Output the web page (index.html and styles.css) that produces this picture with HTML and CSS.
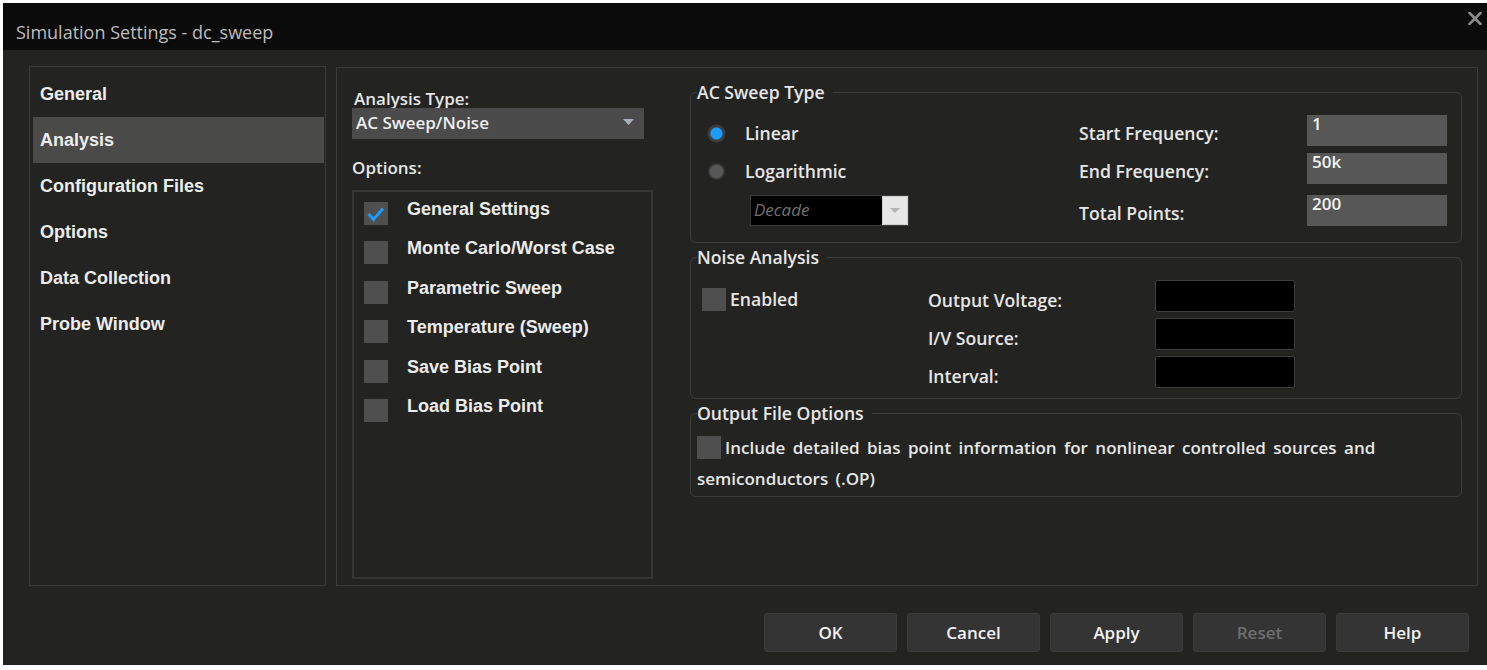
FILE: index.html
```html
<!DOCTYPE html>
<html lang="en">
<head>
<meta charset="utf-8">
<title>Simulation Settings - dc_sweep</title>
<link rel="stylesheet" href="styles.css">
</head>
<body>
<div class="dialog">
  <div class="titlebar">
    <span class="title">Simulation Settings - dc_sweep</span>
    <svg class="close" width="14" height="13" viewBox="0 0 14 13"><path d="M1.5 1 L12.5 12 M12.5 1 L1.5 12" stroke="#8d8d8d" stroke-width="2.6" stroke-linecap="square"/></svg>
  </div>
  <div class="body">
    <div class="main">
      <nav class="nav">
        <div class="nav-item">General</div>
        <div class="nav-item active">Analysis</div>
        <div class="nav-item">Configuration Files</div>
        <div class="nav-item">Options</div>
        <div class="nav-item">Data Collection</div>
        <div class="nav-item">Probe Window</div>
      </nav>
      <section class="panel">
        <div class="col-left">
          <div class="label at-label">Analysis Type:</div>
          <div class="select">
            <span>AC Sweep/Noise</span>
            <svg class="select-arrow" width="11" height="6" viewBox="0 0 11 6"><path d="M0 0 H11 L5.5 6 Z" fill="#a7b0bc"/></svg>
          </div>
          <div class="label opt-label">Options:</div>
          <div class="opt-list">
            <div class="opt-row"><span class="cb"><svg width="24" height="23" viewBox="0 0 24 23"><polyline points="4.5,12 9.5,17.5 19,6.5" fill="none" stroke="#1a9cf7" stroke-width="3"/></svg></span><span class="opt-text">General Settings</span></div>
            <div class="opt-row"><span class="cb"></span><span class="opt-text">Monte Carlo/Worst Case</span></div>
            <div class="opt-row"><span class="cb"></span><span class="opt-text">Parametric Sweep</span></div>
            <div class="opt-row"><span class="cb"></span><span class="opt-text">Temperature (Sweep)</span></div>
            <div class="opt-row"><span class="cb"></span><span class="opt-text">Save Bias Point</span></div>
            <div class="opt-row"><span class="cb"></span><span class="opt-text">Load Bias Point</span></div>
          </div>
        </div>
        <div class="col-right">
          <fieldset class="group g-ac">
            <legend>AC Sweep Type</legend>
            <div class="ac-grid">
              <div class="radio-row"><span class="radio on"></span><span class="label">Linear</span></div>
              <div class="label field-label">Start Frequency:</div>
              <div class="input">1</div>
              <div class="radio-row"><span class="radio"></span><span class="label">Logarithmic</span></div>
              <div class="label field-label">End Frequency:</div>
              <div class="input">50k</div>
              <div class="decade"><span class="decade-text">Decade</span><span class="decade-btn"><svg width="10" height="5" viewBox="0 0 10 5"><path d="M0 0 H10 L5 5 Z" fill="#b3b3b3"/></svg></span></div>
              <div class="label field-label">Total Points:</div>
              <div class="input">200</div>
            </div>
          </fieldset>
          <fieldset class="group g-noise">
            <legend>Noise Analysis</legend>
            <div class="noise-grid">
              <div class="enabled"><span class="cb"></span><span class="label">Enabled</span></div>
              <div class="label noise-label">Output Voltage:</div>
              <div class="input black"></div>
              <div></div>
              <div class="label noise-label">I/V Source:</div>
              <div class="input black"></div>
              <div></div>
              <div class="label noise-label">Interval:</div>
              <div class="input black"></div>
            </div>
          </fieldset>
          <fieldset class="group g-out">
            <legend>Output File Options</legend>
            <p class="out-text"><span class="cb inline"></span>Include detailed bias point information for nonlinear controlled sources and semiconductors (.OP)</p>
          </fieldset>
        </div>
      </section>
    </div>
    <div class="buttons">
      <button class="btn">OK</button>
      <button class="btn">Cancel</button>
      <button class="btn">Apply</button>
      <button class="btn disabled">Reset</button>
      <button class="btn">Help</button>
    </div>
  </div>
</div>
</body>
</html>
```
FILE: styles.css
```css
* { box-sizing: border-box; }
html, body { margin: 0; background: #ffffff; }
body { padding: 3px 0 5px 3px; height: 670px; overflow: hidden; }

.dialog {
  width: 1484px;
  height: 662px;
  background: #232422;
  display: flex;
  flex-direction: column;
  font-family: "Open Sans", "Noto Sans", sans-serif;
  color: #e8e8e8;
}

.titlebar {
  height: 47px;
  flex: none;
  background: #0b0b0b;
  display: flex;
  justify-content: space-between;
  align-items: flex-start;
  padding: 0 5px 0 13px;
}
.title {
  margin-top: 18px;
  font-size: 18px;
  line-height: 22px;
  color: #bdbdbd;
}
.close { margin-top: 9px; }

.body {
  flex: 1;
  display: flex;
  flex-direction: column;
  padding: 16px 9px 0 26px;
}
.main {
  height: 520px;
  display: flex;
  gap: 10px;
}

.nav {
  width: 297px;
  flex: none;
  border: 1px solid #3a3b39;
  padding: 4px 1px 0 3px;
}
.nav-item {
  height: 46px;
  display: flex;
  align-items: center;
  padding-left: 7px;
  font: bold 18px "Liberation Sans", Arial, sans-serif;
  color: #ececec;
}
.nav-item.active { background: #4a4b49; }

.panel {
  flex: 1;
  margin-top: 1px;
  border: 1px solid #3a3b39;
  display: flex;
  gap: 37px;
  padding: 0 15px 0 15px;
}

.label {
  font-size: 17px;
  font-weight: 600;
  line-height: 22px;
  color: #e6e6e6;
  white-space: nowrap;
}
.col-right .label { font-size: 17.6px; }

.col-left {
  width: 301px;
  flex: none;
  display: flex;
  flex-direction: column;
  padding: 21px 0 6px 0;
}
.at-label { line-height: 19px; padding-left: 2px; }
.select {
  height: 31px;
  background: #4b4b4b;
  display: flex;
  align-items: center;
  justify-content: space-between;
  padding: 0 10px 0 4px;
  font-size: 17px;
  font-weight: 600;
  color: #eeeeee;
  width: 292px;
}
.select span { line-height: 22px; margin-top: -1px; }
.select-arrow { margin-top: -3px; }
.opt-label { margin-top: 18px; }
.opt-list {
  flex: 1;
  margin-top: 11px;
  border: 2px solid #353634;
  padding: 6px 0 0 10px;
}
.opt-row {
  height: 39.4px;
  display: flex;
  align-items: flex-start;
  gap: 19px;
}
.cb {
  width: 24px;
  height: 23px;
  flex: none;
  background: #4f4f4f;
  display: block;
}
.opt-row .cb { margin-top: 4px; }
.cb svg { display: block; }
.opt-text {
  font: bold 18px "Liberation Sans", Arial, sans-serif;
  line-height: 22px;
  color: #ececec;
  white-space: nowrap;
}

.col-right {
  width: 772px;
  flex: none;
  padding-top: 13px;
  display: flex;
  flex-direction: column;
  gap: 3px;
}
.group {
  margin: 0;
  min-width: 0;
  border: 1px solid #3c3d3b;
  border-radius: 6px;
  padding: 0 14px 0 6px;
}
.group legend {
  padding: 0 8px 0 0;
  font-size: 17.6px;
  font-weight: 600;
  line-height: 22px;
  color: #e6e6e6;
}

.g-ac { padding-top: 12px; padding-bottom: 16px; }
.ac-grid {
  display: grid;
  grid-template-columns: 382px 228px 140px;
  grid-template-rows: 38px 42px 31px;
}
.radio-row {
  height: 31px;
  padding-top: 5px;
  display: flex;
  align-items: center;
  padding-left: 10px;
  gap: 19px;
}
.radio {
  width: 19px;
  height: 19px;
  border-radius: 50%;
  flex: none;
  background: radial-gradient(circle, #575757 0 6px, rgba(87,87,87,0.4) 7.5px, transparent 9px);
}
.radio.on {
  background: radial-gradient(circle, #1b9dff 0 5.5px, #3d3f42 6.5px 8px, rgba(61,63,66,0.4) 9px, transparent 9.5px);
}
.field-label {
  height: 31px;
  padding-top: 5px;
  display: flex;
  align-items: center;
}
.input {
  height: 31px;
  background: #575757;
  font-size: 17px;
  font-weight: 600;
  line-height: 18px;
  color: #f2f2f2;
  padding: 0 5px;
}
.decade {
  margin-left: 53px;
  width: 159px;
  height: 31px;
  background: #000;
  border: 1px solid #3a3a3a;
  display: flex;
  justify-content: space-between;
}
.decade-text {
  font-size: 17px;
  font-style: italic;
  color: #707070;
  line-height: 28px;
  padding-left: 3px;
}
.decade-btn {
  width: 26px;
  background: #e6e6e6;
  border: 1px solid #cfcfcf;
  display: flex;
  align-items: center;
  justify-content: center;
}

.g-noise { padding-top: 12px; padding-bottom: 10px; }
.noise-grid {
  display: grid;
  grid-template-columns: 231px 227px 140px;
  grid-auto-rows: 32px;
  row-gap: 6px;
}
.enabled {
  display: flex;
  align-items: center;
  gap: 4px;
  padding-left: 5px;
  padding-top: 6px;
}
.noise-label { margin-top: 7.5px; line-height: 24px; }
.input.black {
  height: 32px;
  background: #000;
  border: 1px solid #3d3d3d;
  border-radius: 2px;
}

.g-out { padding-top: 8px; padding-bottom: 2px; }
.out-text {
  margin: 0;
  font-size: 17px;
  font-weight: 600;
  line-height: 31px;
  word-spacing: 3px;
  color: #e6e6e6;
}
.cb.inline {
  display: inline-block;
  vertical-align: -5px;
  margin-right: 4px;
}

.buttons {
  margin-top: 27px;
  margin-right: 9px;
  display: flex;
  justify-content: flex-end;
  gap: 10px;
}
.btn {
  width: 133px;
  height: 39px;
  background: #343434;
  border: 1px solid #3b3b3b;
  border-radius: 3px;
  font-family: "Open Sans", "Noto Sans", sans-serif;
  font-size: 17px;
  font-weight: 600;
  color: #f2f2f2;
  padding: 0;
}
.btn.disabled { color: #6e6e6e; }
```
